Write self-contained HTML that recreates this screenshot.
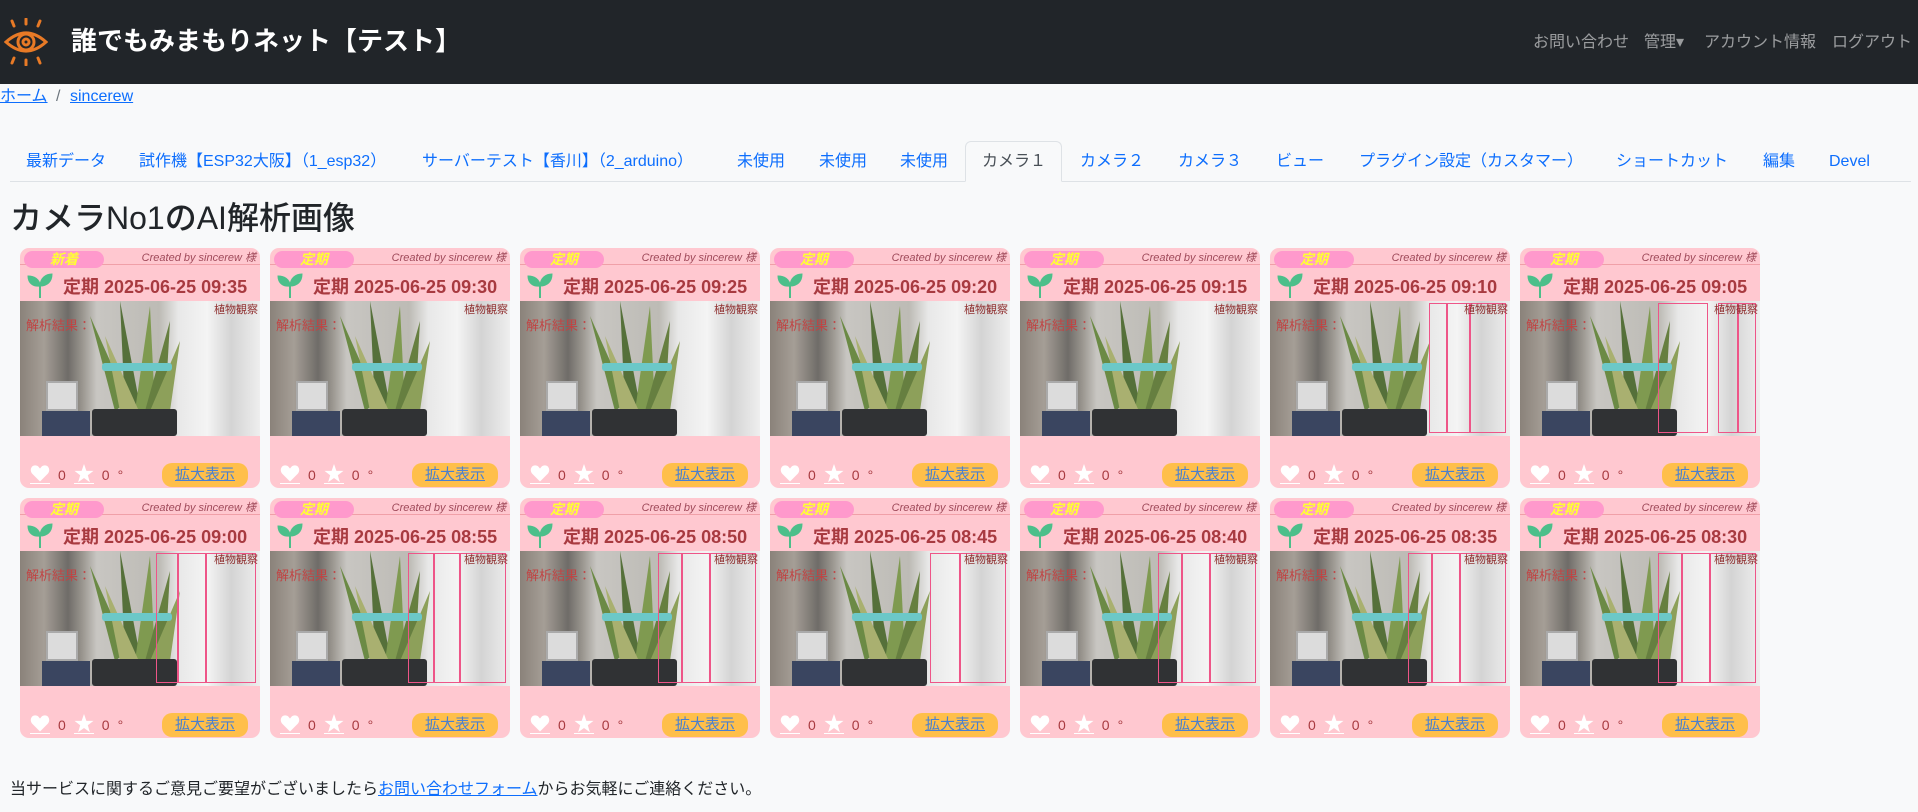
<!DOCTYPE html>
<html><head><meta charset="utf-8"><style>
*{box-sizing:border-box;margin:0;padding:0}
body{width:1918px;height:812px;background:#f8f9fa;font-family:"Liberation Sans","Noto Sans CJK JP",sans-serif;position:relative;overflow:hidden;color:#212529}
.hdr{position:absolute;left:0;top:0;width:1918px;height:84px;background:#212529}
.ttl{position:absolute;left:71px;top:23px;font-size:26px;font-weight:bold;color:#fff;line-height:36px}
.nv{position:absolute;top:32px;font-size:16px;color:rgba(255,255,255,.55);line-height:22px}
.bc{position:absolute;top:87px;font-size:16px;line-height:20px;color:#0d6efd;text-decoration:underline}
.tab{position:absolute;top:152px;font-size:16px;line-height:20px;color:#0d6efd;white-space:nowrap}
.tline{position:absolute;left:10px;top:181px;width:1901px;height:1px;background:#dee2e6}
.act{position:absolute;left:965px;top:141px;width:97px;height:41px;border:1px solid #dee2e6;border-bottom:1px solid #f8f9fa;border-radius:6px 6px 0 0;background:#f8f9fa}
h1{position:absolute;left:10px;top:198px;font-size:32px;line-height:40px;font-weight:500}
.card{position:absolute;width:240px;height:240px;background:#ffc8d0;border-radius:9px;overflow:hidden}
.pill{position:absolute;left:4px;top:3px;width:80px;height:17px;background:#ff99cc;border-radius:9px;color:#ffff33;font-style:italic;font-weight:bold;font-size:14px;line-height:17px;text-align:center}
.sep{position:absolute;left:0;top:16px;width:240px;height:1px;background:#f0a0a8}
.cb{position:absolute;right:4px;top:1px;font-size:11px;font-style:italic;color:#a04a5a}
.leaf{position:absolute;left:6px;top:23px}
.ct{position:absolute;left:43px;top:25px;font-size:18px;font-weight:bold;color:#a83a40;white-space:nowrap}
.img{position:absolute;left:0;top:53px;width:240px;height:135px;background:linear-gradient(90deg,#8a827a 0%,#a59e96 10%,#6f6c68 20%,#9a968f 26%,#c8c6c2 32%,#bdbbb5 58%,#e8e8e8 66%,#f4f4f4 78%,#d4d4d4 88%,#eee 100%);overflow:hidden}
.pl{position:absolute;left:0;top:0}
.pot{position:absolute;left:72px;top:108px;width:85px;height:27px;background:#303234;border-radius:3px}
.box1{position:absolute;left:26px;top:80px;width:32px;height:30px;background:#dcdcdc;border:2px solid #aaa}
.box2{position:absolute;left:22px;top:110px;width:48px;height:25px;background:#3a4560}
.an{position:absolute;left:6px;top:14px;font-size:13px;color:#c04444}
.pn{position:absolute;right:2px;top:0;font-size:11px;color:#903030}
.det{position:absolute;top:2px;height:130px;border:1px solid #ee5588}
.bot{position:absolute;left:10px;top:216px;font-size:14px;color:#a83a40;white-space:nowrap;line-height:20px}
.bot svg{vertical-align:-4px;border-bottom:1px solid #fff}
.bot span{display:inline-block;margin-right:8px}
.btn{position:absolute;left:142px;top:215px;width:86px;height:24px;background:#ffbf4a;border-radius:10px;color:#4a80d0;text-decoration:underline;font-size:15px;line-height:24px;text-align:center}
.ft{position:absolute;left:10px;top:775px;font-size:16px}
.ft a{color:#0d6efd;text-decoration:underline}
</style></head><body>
<div class="hdr">
<svg style="position:absolute;left:4px;top:18px" width="44" height="48" viewBox="0 0 44 48"><g stroke="#e87a26" stroke-width="3" fill="none" stroke-linecap="round"><line x1="8" y1="3" x2="10" y2="8"/><line x1="22" y1="1" x2="22" y2="6"/><line x1="36" y1="3" x2="34" y2="8"/><line x1="8" y1="45" x2="10" y2="40"/><line x1="22" y1="47" x2="22" y2="42"/><line x1="36" y1="45" x2="34" y2="40"/><path d="M2 24 Q22 6 42 24 Q22 42 2 24Z"/><circle cx="22" cy="24" r="8"/><circle cx="22" cy="24" r="3"/></g></svg>
<div class="ttl">誰でもみまもりネット【テスト】</div>
<div class="nv" style="left:1533px">お問い合わせ</div>
<div class="nv" style="left:1644px">管理▾</div>
<div class="nv" style="left:1704px">アカウント情報</div>
<div class="nv" style="left:1832px">ログアウト</div>
</div>
<div class="bc" style="left:0">ホーム</div><div style="position:absolute;left:56px;top:87px;font-size:16px;line-height:20px;color:#6c757d">/</div><div class="bc" style="left:70px">sincerew</div>
<div class="tline"></div><div class="act"></div>
<div class="tab" style="left:26px">最新データ</div>
<div class="tab" style="left:139px">試作機【ESP32大阪】（1_esp32）</div>
<div class="tab" style="left:422px">サーバーテスト【香川】（2_arduino）</div>
<div class="tab" style="left:737px">未使用</div>
<div class="tab" style="left:819px">未使用</div>
<div class="tab" style="left:900px">未使用</div>
<div class="tab" style="left:982px;color:#495057">カメラ１</div>
<div class="tab" style="left:1080px">カメラ２</div>
<div class="tab" style="left:1178px">カメラ３</div>
<div class="tab" style="left:1276px">ビュー</div>
<div class="tab" style="left:1359px">プラグイン設定（カスタマー）</div>
<div class="tab" style="left:1616px">ショートカット</div>
<div class="tab" style="left:1763px">編集</div>
<div class="tab" style="left:1829px">Devel</div>
<h1>カメラNo1のAI解析画像</h1>

<svg width="0" height="0" style="position:absolute"><defs>
<symbol id="lf" viewBox="0 0 28 28"><path d="M14 27V15C14 8 8 5 2 5C2 12 7 16 14 15M14 15C14 7 20 3 26 3C26 11 21 15 14 15" fill="#4cbf8a" stroke="#4cbf8a" stroke-width="1"/><line x1="14" y1="14" x2="14" y2="27" stroke="#4cbf8a" stroke-width="2"/></symbol>
<symbol id="pl" viewBox="0 0 240 135"><g><polygon points="95,110 70,15 108,100" fill="#6b8a45"/><polygon points="105,110 100,0 120,105" fill="#55703a"/><polygon points="115,110 130,5 135,108" fill="#7f9a50"/><polygon points="125,110 150,20 145,108" fill="#667f40"/><polygon points="100,110 85,35 118,108" fill="#a9b070"/><polygon points="130,110 160,40 150,110" fill="#8da05a"/></g><rect x="82" y="62" width="70" height="8" rx="3" fill="#6cc8c8"/></symbol>
<symbol id="ht" viewBox="0 0 20 18"><path d="M10 17L2 9C-1 5 2 0 6 1C8 1 9 3 10 4C11 3 12 1 14 1C18 0 21 5 18 9Z" fill="#fff"/></symbol>
<symbol id="st" viewBox="0 0 20 19"><path d="M10 0L12.4 6.9H19.5L13.8 11.2L15.9 18.2L10 14L4.1 18.2L6.2 11.2L0.5 6.9H7.6Z" fill="#fff"/></symbol>
</defs></svg>

<div class="card" style="left:20px;top:248px"><div class="sep"></div><div class="pill">新着</div><div class="cb">Created by sincerew 様</div><svg class="leaf" width="28" height="28"><use href="#lf"/></svg><div class="ct">定期 2025-06-25 09:35</div><div class="img"><div class="box1"></div><div class="box2"></div><svg class="pl" width="240" height="135"><use href="#pl"/></svg><div class="pot"></div><div class="an">解析結果：</div><div class="pn">植物観察</div></div><div class="bot"><span><svg width="20" height="20"><use href="#ht"/></svg></span><span>0</span><span><svg width="20" height="20"><use href="#st"/></svg></span><span>0</span><span>°</span></div><div class="btn">拡大表示</div></div>
<div class="card" style="left:270px;top:248px"><div class="sep"></div><div class="pill">定期</div><div class="cb">Created by sincerew 様</div><svg class="leaf" width="28" height="28"><use href="#lf"/></svg><div class="ct">定期 2025-06-25 09:30</div><div class="img"><div class="box1"></div><div class="box2"></div><svg class="pl" width="240" height="135"><use href="#pl"/></svg><div class="pot"></div><div class="an">解析結果：</div><div class="pn">植物観察</div></div><div class="bot"><span><svg width="20" height="20"><use href="#ht"/></svg></span><span>0</span><span><svg width="20" height="20"><use href="#st"/></svg></span><span>0</span><span>°</span></div><div class="btn">拡大表示</div></div>
<div class="card" style="left:520px;top:248px"><div class="sep"></div><div class="pill">定期</div><div class="cb">Created by sincerew 様</div><svg class="leaf" width="28" height="28"><use href="#lf"/></svg><div class="ct">定期 2025-06-25 09:25</div><div class="img"><div class="box1"></div><div class="box2"></div><svg class="pl" width="240" height="135"><use href="#pl"/></svg><div class="pot"></div><div class="an">解析結果：</div><div class="pn">植物観察</div></div><div class="bot"><span><svg width="20" height="20"><use href="#ht"/></svg></span><span>0</span><span><svg width="20" height="20"><use href="#st"/></svg></span><span>0</span><span>°</span></div><div class="btn">拡大表示</div></div>
<div class="card" style="left:770px;top:248px"><div class="sep"></div><div class="pill">定期</div><div class="cb">Created by sincerew 様</div><svg class="leaf" width="28" height="28"><use href="#lf"/></svg><div class="ct">定期 2025-06-25 09:20</div><div class="img"><div class="box1"></div><div class="box2"></div><svg class="pl" width="240" height="135"><use href="#pl"/></svg><div class="pot"></div><div class="an">解析結果：</div><div class="pn">植物観察</div></div><div class="bot"><span><svg width="20" height="20"><use href="#ht"/></svg></span><span>0</span><span><svg width="20" height="20"><use href="#st"/></svg></span><span>0</span><span>°</span></div><div class="btn">拡大表示</div></div>
<div class="card" style="left:1020px;top:248px"><div class="sep"></div><div class="pill">定期</div><div class="cb">Created by sincerew 様</div><svg class="leaf" width="28" height="28"><use href="#lf"/></svg><div class="ct">定期 2025-06-25 09:15</div><div class="img"><div class="box1"></div><div class="box2"></div><svg class="pl" width="240" height="135"><use href="#pl"/></svg><div class="pot"></div><div class="an">解析結果：</div><div class="pn">植物観察</div></div><div class="bot"><span><svg width="20" height="20"><use href="#ht"/></svg></span><span>0</span><span><svg width="20" height="20"><use href="#st"/></svg></span><span>0</span><span>°</span></div><div class="btn">拡大表示</div></div>
<div class="card" style="left:1270px;top:248px"><div class="sep"></div><div class="pill">定期</div><div class="cb">Created by sincerew 様</div><svg class="leaf" width="28" height="28"><use href="#lf"/></svg><div class="ct">定期 2025-06-25 09:10</div><div class="img"><div class="box1"></div><div class="box2"></div><svg class="pl" width="240" height="135"><use href="#pl"/></svg><div class="pot"></div><div class="det" style="left:159px;width:18px"></div><div class="det" style="left:177px;width:23px"></div><div class="det" style="left:200px;width:36px"></div><div class="an">解析結果：</div><div class="pn">植物観察</div></div><div class="bot"><span><svg width="20" height="20"><use href="#ht"/></svg></span><span>0</span><span><svg width="20" height="20"><use href="#st"/></svg></span><span>0</span><span>°</span></div><div class="btn">拡大表示</div></div>
<div class="card" style="left:1520px;top:248px"><div class="sep"></div><div class="pill">定期</div><div class="cb">Created by sincerew 様</div><svg class="leaf" width="28" height="28"><use href="#lf"/></svg><div class="ct">定期 2025-06-25 09:05</div><div class="img"><div class="box1"></div><div class="box2"></div><svg class="pl" width="240" height="135"><use href="#pl"/></svg><div class="pot"></div><div class="det" style="left:138px;width:50px"></div><div class="det" style="left:198px;width:20px"></div><div class="det" style="left:218px;width:18px"></div><div class="an">解析結果：</div><div class="pn">植物観察</div></div><div class="bot"><span><svg width="20" height="20"><use href="#ht"/></svg></span><span>0</span><span><svg width="20" height="20"><use href="#st"/></svg></span><span>0</span><span>°</span></div><div class="btn">拡大表示</div></div>

<div class="card" style="left:20px;top:498px"><div class="sep"></div><div class="pill">定期</div><div class="cb">Created by sincerew 様</div><svg class="leaf" width="28" height="28"><use href="#lf"/></svg><div class="ct">定期 2025-06-25 09:00</div><div class="img"><div class="box1"></div><div class="box2"></div><svg class="pl" width="240" height="135"><use href="#pl"/></svg><div class="pot"></div><div class="det" style="left:136px;width:22px"></div><div class="det" style="left:158px;width:28px"></div><div class="det" style="left:186px;width:50px"></div><div class="an">解析結果：</div><div class="pn">植物観察</div></div><div class="bot"><span><svg width="20" height="20"><use href="#ht"/></svg></span><span>0</span><span><svg width="20" height="20"><use href="#st"/></svg></span><span>0</span><span>°</span></div><div class="btn">拡大表示</div></div>
<div class="card" style="left:270px;top:498px"><div class="sep"></div><div class="pill">定期</div><div class="cb">Created by sincerew 様</div><svg class="leaf" width="28" height="28"><use href="#lf"/></svg><div class="ct">定期 2025-06-25 08:55</div><div class="img"><div class="box1"></div><div class="box2"></div><svg class="pl" width="240" height="135"><use href="#pl"/></svg><div class="pot"></div><div class="det" style="left:138px;width:26px"></div><div class="det" style="left:164px;width:26px"></div><div class="det" style="left:190px;width:46px"></div><div class="an">解析結果：</div><div class="pn">植物観察</div></div><div class="bot"><span><svg width="20" height="20"><use href="#ht"/></svg></span><span>0</span><span><svg width="20" height="20"><use href="#st"/></svg></span><span>0</span><span>°</span></div><div class="btn">拡大表示</div></div>
<div class="card" style="left:520px;top:498px"><div class="sep"></div><div class="pill">定期</div><div class="cb">Created by sincerew 様</div><svg class="leaf" width="28" height="28"><use href="#lf"/></svg><div class="ct">定期 2025-06-25 08:50</div><div class="img"><div class="box1"></div><div class="box2"></div><svg class="pl" width="240" height="135"><use href="#pl"/></svg><div class="pot"></div><div class="det" style="left:138px;width:24px"></div><div class="det" style="left:162px;width:28px"></div><div class="det" style="left:190px;width:46px"></div><div class="an">解析結果：</div><div class="pn">植物観察</div></div><div class="bot"><span><svg width="20" height="20"><use href="#ht"/></svg></span><span>0</span><span><svg width="20" height="20"><use href="#st"/></svg></span><span>0</span><span>°</span></div><div class="btn">拡大表示</div></div>
<div class="card" style="left:770px;top:498px"><div class="sep"></div><div class="pill">定期</div><div class="cb">Created by sincerew 様</div><svg class="leaf" width="28" height="28"><use href="#lf"/></svg><div class="ct">定期 2025-06-25 08:45</div><div class="img"><div class="box1"></div><div class="box2"></div><svg class="pl" width="240" height="135"><use href="#pl"/></svg><div class="pot"></div><div class="det" style="left:160px;width:30px"></div><div class="det" style="left:190px;width:46px"></div><div class="an">解析結果：</div><div class="pn">植物観察</div></div><div class="bot"><span><svg width="20" height="20"><use href="#ht"/></svg></span><span>0</span><span><svg width="20" height="20"><use href="#st"/></svg></span><span>0</span><span>°</span></div><div class="btn">拡大表示</div></div>
<div class="card" style="left:1020px;top:498px"><div class="sep"></div><div class="pill">定期</div><div class="cb">Created by sincerew 様</div><svg class="leaf" width="28" height="28"><use href="#lf"/></svg><div class="ct">定期 2025-06-25 08:40</div><div class="img"><div class="box1"></div><div class="box2"></div><svg class="pl" width="240" height="135"><use href="#pl"/></svg><div class="pot"></div><div class="det" style="left:138px;width:24px"></div><div class="det" style="left:162px;width:28px"></div><div class="det" style="left:190px;width:46px"></div><div class="an">解析結果：</div><div class="pn">植物観察</div></div><div class="bot"><span><svg width="20" height="20"><use href="#ht"/></svg></span><span>0</span><span><svg width="20" height="20"><use href="#st"/></svg></span><span>0</span><span>°</span></div><div class="btn">拡大表示</div></div>
<div class="card" style="left:1270px;top:498px"><div class="sep"></div><div class="pill">定期</div><div class="cb">Created by sincerew 様</div><svg class="leaf" width="28" height="28"><use href="#lf"/></svg><div class="ct">定期 2025-06-25 08:35</div><div class="img"><div class="box1"></div><div class="box2"></div><svg class="pl" width="240" height="135"><use href="#pl"/></svg><div class="pot"></div><div class="det" style="left:138px;width:24px"></div><div class="det" style="left:162px;width:28px"></div><div class="det" style="left:190px;width:46px"></div><div class="an">解析結果：</div><div class="pn">植物観察</div></div><div class="bot"><span><svg width="20" height="20"><use href="#ht"/></svg></span><span>0</span><span><svg width="20" height="20"><use href="#st"/></svg></span><span>0</span><span>°</span></div><div class="btn">拡大表示</div></div>
<div class="card" style="left:1520px;top:498px"><div class="sep"></div><div class="pill">定期</div><div class="cb">Created by sincerew 様</div><svg class="leaf" width="28" height="28"><use href="#lf"/></svg><div class="ct">定期 2025-06-25 08:30</div><div class="img"><div class="box1"></div><div class="box2"></div><svg class="pl" width="240" height="135"><use href="#pl"/></svg><div class="pot"></div><div class="det" style="left:138px;width:24px"></div><div class="det" style="left:162px;width:28px"></div><div class="det" style="left:190px;width:46px"></div><div class="an">解析結果：</div><div class="pn">植物観察</div></div><div class="bot"><span><svg width="20" height="20"><use href="#ht"/></svg></span><span>0</span><span><svg width="20" height="20"><use href="#st"/></svg></span><span>0</span><span>°</span></div><div class="btn">拡大表示</div></div>

<div class="ft">当サービスに関するご意見ご要望がございましたら<a>お問い合わせフォーム</a>からお気軽にご連絡ください。</div>
</body></html>
